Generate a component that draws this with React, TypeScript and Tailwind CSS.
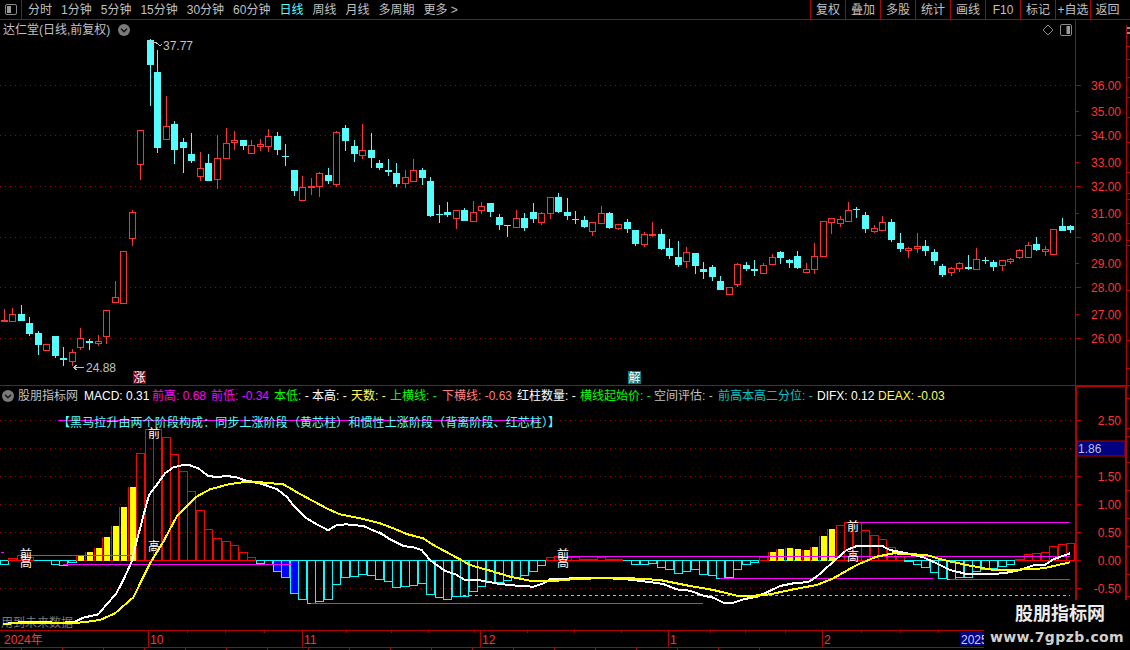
import React from "react";

const RED = "#ff3232";
const CYAN = "#54fcfc";
const LINE = "#b40000";
const DOT = "#a00000";

// candles: cx, wick top, body top, body bottom, wick bottom, 1 = up. read off at 3x, y from 130
const candlesA = [
  [13,537,570,572,572,1],[37,534,553,575,576,1],[64,525,553,573,573,0],[88,561,580,612,617,0],[115,603,610,645,675,0],
  [139,643,643,662,662,1],[166,618,618,678,684,0],[190,651,684,690,708,0],[217,658,667,693,708,1],[241,595,625,653,660,1],
  [268,627,632,637,660,0],[295,616,634,641,648,1],[319,541,541,620,642,1],[346,453,502,518,518,1],[370,364,364,521,521,1],
  [397,240,247,326,348,1],[421,0,0,101,150,1],[450,-273,-270,-195,-72,0],[472,-240,-174,54,68,0],[498,-102,-12,26,26,1],
  [523,-27,-18,60,102,0],[550,25,36,54,128,0],[574,10,72,93,98,0],[601,66,115,140,153,1],[625,72,99,152,152,0],
  [652,15,85,149,177,1],[679,-6,40,85,86,1],[703,3,31,37,60,1],[730,30,30,48,60,0],[754,30,46,71,72,1],
  [781,27,42,47,63,1],[805,-3,18,47,66,1],[832,6,18,60,75,0],[856,42,78,80,108,0],[883,120,120,183,198,0],
  [907,138,172,212,213,1],[934,144,169,173,195,1],[958,126,130,170,201,1],[985,114,135,153,162,0],[1009,3,6,162,170,1],
  [1036,-15,-6,33,63,0],[1063,30,48,72,96,0],[1087,-18,60,75,87,1],[1114,9,60,84,114,0],[1138,90,99,114,120,0],
];
// x from 380
const candlesB = [
  [25,87,120,125,138,0],[49,99,129,162,171,0],[76,120,141,158,174,1],[100,87,120,152,153,1],[127,114,120,144,165,0],
  [151,141,153,258,261,0],[178,225,252,255,279,0],[202,216,246,255,261,0],[229,240,241,266,297,1],[253,234,240,273,273,0],
  [280,213,247,275,276,1],[304,216,229,242,252,1],[331,219,219,246,261,0],[358,252,261,285,300,0],[382,285,285,288,321,0],
  [409,240,265,293,294,1],[433,249,264,294,303,0],[460,219,246,267,279,0],[484,246,250,278,285,1],[511,201,202,250,267,1],
  [535,189,201,246,249,0],[562,204,246,258,270,0],[586,243,267,270,282,0],[613,258,270,291,294,0],[637,276,277,305,318,1],
  [664,228,250,279,282,1],[688,246,249,294,297,0],[715,282,283,296,300,1],[742,267,276,297,309,0],[766,300,300,342,348,0],
  [793,306,313,344,351,1],[817,276,312,316,321,1],[844,297,312,357,360,0],[868,327,354,378,387,0],[895,333,381,405,411,0],
  [919,351,367,395,414,1],[946,369,369,408,432,0],[970,396,417,426,447,0],[997,405,411,441,453,0],[1021,438,453,480,480,0],
  [1048,470,472,494,495,1],[1072,399,403,464,471,1],[1099,396,405,417,423,0],
];
// x from 750
const candlesC = [
  [13,390,417,423,438,0],[40,400,406,430,432,1],[67,372,382,403,405,1],[91,363,366,384,402,0],[118,387,390,399,414,0],
  [142,363,378,414,417,0],[169,399,418,428,429,1],[193,339,379,418,432,1],[220,274,274,379,379,1],[244,264,265,277,312,1],
  [271,258,268,281,291,1],[295,216,241,275,276,1],[320,231,238,241,264,0],[346,246,255,297,309,0],[373,285,295,304,309,1],
  [397,258,277,302,303,1],[424,267,276,330,336,0],[451,309,339,357,366,0],[475,351,353,359,384,1],[502,309,348,354,369,1],
  [526,330,348,363,378,0],[553,357,366,393,405,0],[577,402,408,435,441,0],[604,411,415,428,438,1],[628,396,400,416,426,1],
  [655,375,411,417,420,0],[679,354,388,419,420,1],[706,381,390,393,402,0],[730,390,396,411,423,0],[757,391,391,406,423,1],
  [781,384,387,392,402,1],[808,357,360,380,387,1],[835,336,346,383,384,1],[859,321,342,360,363,0],[886,348,357,362,378,1],
  [910,298,298,374,374,1],[937,264,288,303,303,0],[961,285,288,300,309,0],
];

// histogram: cx, end, kind (0 red, 1 yellow, 2 cyan, 3 blue)
const barsA = [
  [13,431,2],[37,414,0],[64,406,0],[88,412,0],[166,431,2],[190,435,2],[217,427,2],[241,402,1],[268,393,1],[295,381,1],
  [319,348,1],[346,315,1],[370,258,1],[397,198,1],[421,100,0],[448,28,0],[472,28,0],[498,50,0],[523,102,0],[550,154,0],
  [574,214,0],[601,271,0],[625,328,0],[652,355,0],[679,364,0],[703,376,0],[730,397,0],[754,412,0],[781,429,2],[805,432,2],
  [832,452,3],[856,472,3],[883,518,3],[907,538,2],[934,550,2],[958,542,2],[985,538,2],[1009,493,2],[1036,472,2],[1063,469,2],
  [1087,463,2],[1114,466,2],[1138,476,2],
];
const barsB = [
  [25,244,2],[49,260,2],[76,259,2],[100,254,2],[127,250,2],[151,281,2],[178,292,2],[202,296,2],[229,289,2],[253,289,2],
  [280,274,2],[304,257,2],[331,245,2],[358,245,2],[382,241,2],[409,232,2],[433,226,2],[460,214,2],[484,196,2],[511,172,0],
  [535,169,0],[562,172,0],[586,172,0],[613,178,0],[637,178,0],[664,170,0],[688,178,0],[715,178,0],[766,193,2],[793,193,2],
  [817,190,2],[844,200,2],[868,208,2],[895,220,2],[919,214,2],[946,208,2],[970,223,2],[997,226,2],[1021,235,2],[1048,232,2],
  [1072,208,2],[1099,193,2],
];
const barsC = [
  [13,187,2],[40,170,0],[67,153,1],[91,145,1],[118,142,1],[142,145,1],[169,148,1],[193,139,1],[220,105,1],[244,85,1],
  [271,76,0],[295,67,0],[320,67,0],[346,91,0],[373,106,0],[397,118,0],[424,142,0],[451,169,0],[475,184,2],[502,193,2],
  [526,202,2],[553,217,2],[577,235,2],[604,238,2],[628,232,2],[655,232,2],[679,214,2],[706,208,2],[730,205,2],[757,199,2],
  [781,193,2],[808,178,0],[835,163,0],[859,160,0],[886,157,0],[910,139,0],[937,133,0],[961,130,0],
];

const whiteLine = [
  [[10,612],[60,607],[120,607],[190,608],[225,605],[250,593],[295,583],[320,553],[348,522],[370,480],[395,425],[415,345],[432,280],[447,225],[470,195],[495,160],[520,142],[545,136],[570,136],[595,145],[625,168],[650,171],[680,168],[710,172],[740,183],[780,190],[830,207],[860,230],[885,262],[915,292],[945,310],[985,331],[1010,315],[1040,313],[1090,318],[1140,340]],
  [[0,98],[30,118],[70,138],[100,142],[125,150],[150,180],[195,213],[225,222],[255,240],[300,241],[360,252],[420,258],[460,260],[490,250],[510,238],[580,235],[660,233],[740,238],[800,245],[850,252],[890,268],[930,272],[970,287],[1000,293],[1030,308],[1055,310],[1090,298],[1140,288]],
  [[0,290],[40,282],[90,258],[130,250],[175,246],[200,230],[250,185],[290,150],[320,138],[395,137],[420,150],[470,160],[520,172],[560,190],[600,210],[650,222],[710,222],[760,220],[810,210],[850,196],[885,194],[910,178],[960,160]],
];
const yellowLine = [
  [[10,612],[60,609],[190,610],[250,607],[300,600],[345,580],[400,532],[450,430],[490,365],[530,290],[590,230],[630,208],[690,192],[750,184],[850,193],[900,222],[980,265],[1020,283],[1090,297],[1140,310]],
  [[0,70],[40,85],[80,102],[130,115],[160,135],[240,178],[270,195],[330,212],[390,230],[450,242],[530,242],[600,236],[740,234],[840,240],[930,258],[1000,270],[1070,287],[1140,287]],
  [[0,288],[60,283],[130,268],[200,255],[250,235],[320,195],[380,170],[430,160],[530,165],[580,180],[650,195],[730,210],[800,209],[880,205],[960,187]],
];
const origins = [[0, 420], [380, 500], [750, 500]];
const toPoints = (parts: number[][][]) =>
  parts.map((p, i) => p.map(([x, y]) => `${origins[i][0] + x / 3},${origins[i][1] + y / 3}`).join(" ")).join(" ");

const upperGrid = [85.5, 135.5, 186.5, 237.5, 287.5, 338.5];
const lowerGrid = [420.5, 448.5, 476.5, 504.5, 532.5, 588.5];

const priceLabels: [string, number][] = [
  ["36.00", 85], ["35.00", 111], ["34.00", 135], ["33.00", 162], ["32.00", 186], ["31.00", 213],
  ["30.00", 237], ["29.00", 263], ["28.00", 287], ["27.00", 314], ["26.00", 338],
];
const macdLabels: [string, number][] = [
  ["2.50", 420], ["1.50", 476], ["1.00", 504], ["0.50", 532], ["0.00", 560], ["-0.50", 588],
];
const edgeTicks = [46, 59, 77, 97, 117, 142, 172, 193, 199, 223, 240, 245, 290, 340, 368];
const edgeTicksLower = [398, 428, 436, 462, 490, 518, 546, 574, 596];

const periods = ["分时", "1分钟", "5分钟", "15分钟", "30分钟", "60分钟", "日线", "周线", "月线", "多周期", "更多 >"];
const actions = ["复权", "叠加", "多股", "统计", "画线", "F10", "标记", "+自选"];

const legend: { text: string; cls: string; w: string }[] = [
  { text: "MACD: 0.31", cls: "text-white", w: "w-[68px]" },
  { text: "前高: 0.68", cls: "text-[#ff00ff]", w: "w-[59px]" },
  { text: "前低: -0.34", cls: "text-[#ff00ff]", w: "w-[63px]" },
  { text: "本低:", cls: "text-[#00ff00]", w: "w-[38px]" },
  { text: "本高: -", cls: "text-white", w: "w-[39px]" },
  { text: "天数: -", cls: "text-[#ffff54]", w: "w-[39px]" },
  { text: "上横线: -", cls: "text-[#00ff00]", w: "w-[52px]" },
  { text: "下横线: -0.63", cls: "text-[#ff8080]", w: "w-[75px]" },
  { text: "红柱数量: -", cls: "text-white", w: "w-[63px]" },
  { text: "横线起始价: -", cls: "text-[#00ff00]", w: "w-[74px]" },
  { text: "空间评估: -", cls: "text-[#c0c0c0]", w: "w-[64px]" },
  { text: "前高本高二分位: -", cls: "text-[#00c8c8]", w: "w-[99px]" },
  { text: "DIFX: 0.12", cls: "text-white", w: "w-[61px]" },
  { text: "DEAX: -0.03", cls: "text-[#ffff54]", w: "w-[70px]" },
];

function Candles({ data, ox }: { data: number[][]; ox: number }) {
  return (
    <>
      {data.map(([cx, wt, bt, bb, wb, up], i) => {
        const left = Math.floor(ox + cx / 3) - 3;
        const top = Math.round(130 + bt / 3);
        const h = Math.max(Math.round((bb - bt) / 3), 1);
        const color = up ? RED : CYAN;
        return (
          <g key={i}>
            <line x1={left + 3.5} x2={left + 3.5} y1={130 + wt / 3} y2={130 + wb / 3} stroke={color} />
            {up ? (
              <rect x={left + 0.5} y={top + 0.5} width={6} height={h} fill="#000" stroke={color} />
            ) : (
              <rect x={left} y={top} width={7} height={h} fill={color} />
            )}
          </g>
        );
      })}
    </>
  );
}

function Bars({ data, ox, oy }: { data: number[][]; ox: number; oy: number }) {
  const zero = 560.5;
  return (
    <>
      {data.map(([cx, end, kind], i) => {
        const left = Math.round(ox + cx / 3 - 4) + 0.5;
        const y = Math.round(oy + end / 3) + 0.5;
        const top = Math.min(y, zero);
        const h = Math.abs(y - zero);
        if (kind === 1) {
          return (
            <g key={i}>
              <rect x={left + 1.5} y={top} width={6} height={h} fill="#ffff00" />
              <line x1={left} x2={left} y1={top} y2={zero} stroke="#ff0000" />
            </g>
          );
        }
        return (
          <rect
            key={i}
            x={left}
            y={top}
            width={8}
            height={h}
            fill={kind === 3 ? "#0000ff" : "none"}
            stroke={kind === 0 ? "#ff0000" : "#00ffff"}
          />
        );
      })}
    </>
  );
}

function Chevron({ className }: { className: string }) {
  return (
    <svg className={className} viewBox="0 0 12 12">
      <circle cx="6" cy="6" r="6" fill="#7a7a7a" />
      <path d="M3 4.8 L6 7.8 L9 4.8" fill="none" stroke="#111" strokeWidth="1.4" />
    </svg>
  );
}

export default function App() {
  return (
    <div className="relative w-[1130px] h-[650px] bg-black overflow-hidden flex flex-col font-['Liberation_Sans','Noto_Sans_CJK_SC',sans-serif] text-[12px] leading-none text-[#c0c0c0]">
      {/* toolbar */}
      <div className="h-[20px] flex-none flex items-stretch border-b border-[#b40000]">
        <div className="w-[22px] flex-none flex items-center justify-center border-r border-[#b40000]">
          <svg className="w-[12px] h-[11px]" viewBox="0 0 12 11">
            <rect x="0.5" y="0.5" width="11" height="10" rx="1.5" fill="none" stroke="#8a8a8a" />
            <rect x="2" y="2" width="4" height="7" fill="#9a9a9a" />
          </svg>
        </div>
        <div className="flex items-center gap-[9px] pl-[6px]">
          {periods.map((p) => (
            <span key={p} className={p === "日线" ? "text-[#55ffff]" : ""}>
              {p}
            </span>
          ))}
        </div>
        <div className="ml-auto flex items-stretch">
          {actions.map((a) => (
            <div key={a} className="w-[35px] flex items-center justify-center border-l border-[#b40000]">
              {a}
            </div>
          ))}
          <div className="w-[40px] flex items-center justify-center pr-[6px] border-l border-[#b40000]">返回</div>
        </div>
      </div>

      {/* price pane */}
      <div className="h-[366px] flex-none flex border-b border-[#b40000]">
        <div className="relative w-[1075px] flex-none">
          <svg className="absolute inset-0 w-full h-full" viewBox="0 20 1075 365" shapeRendering="crispEdges">
            {upperGrid.map((y) => (
              <line key={y} x1="0" x2="1075" y1={y} y2={y} stroke={DOT} strokeDasharray="1 4" />
            ))}
            <Candles data={candlesA} ox={0} />
            <Candles data={candlesB} ox={380} />
            <Candles data={candlesC} ox={750} />
            <path d="M150 42.5 L156 42.5 L160 45.5 L162 44.5" fill="none" stroke="#c0c0c0" />
            <path d="M73 367.5 L84 367.5 M73 367.5 L77 365 M73 367.5 L77 370" fill="none" stroke="#c0c0c0" />
            <text x="163" y="49.5" fill="#c0c0c0" fontSize="12" shapeRendering="auto">37.77</text>
            <text x="86" y="371.5" fill="#c0c0c0" fontSize="12" shapeRendering="auto">24.88</text>
          </svg>
          <div className="relative h-[19px] flex items-center gap-[6px] pl-[3px]">
            <span>达仁堂(日线,前复权)</span>
            <Chevron className="w-[12px] h-[12px] ml-[2px]" />
          </div>
          <svg className="absolute left-[1042px] top-[4px] w-[12px] h-[12px]" viewBox="0 0 12 12">
            <path d="M6 1 L11 6 L6 11 L1 6 Z" fill="none" stroke="#8a8a8a" />
          </svg>
          <svg className="absolute left-[1060px] top-[4px] w-[12px] h-[12px]" viewBox="0 0 12 12">
            <rect x="0.5" y="0.5" width="11" height="11" rx="1.5" fill="none" stroke="#8a8a8a" />
            <rect x="6.5" y="2" width="3.5" height="8" fill="#9a9a9a" />
          </svg>
          <div className="absolute left-[133px] top-[351px] w-[13px] h-[13px] bg-[#8b0000] text-white text-[12px] flex items-center justify-center">
            涨
          </div>
          <div className="absolute left-[628px] top-[351px] w-[13px] h-[13px] bg-[#008080] text-white text-[12px] flex items-center justify-center">
            解
          </div>
        </div>
        <div className="flex-1 border-l border-[#b40000]">
          <svg className="block w-[54px] h-[365px]" viewBox="1076 20 54 365">
            <line x1="1126.5" x2="1126.5" y1="25" y2="385" stroke={LINE} />
            <rect x="1127" y="27" width="3" height="2" fill="#8a8a8a" />
            <rect x="1127" y="32" width="3" height="2" fill="#8a8a8a" />
            {edgeTicks.map((y) => (
              <line key={y} x1="1127" x2="1130" y1={y + 0.5} y2={y + 0.5} stroke={LINE} />
            ))}
            {priceLabels.map(([t, y]) => (
              <g key={t}>
                <line x1="1076" x2={Number(t) % 2 === 0 ? 1081 : 1079} y1={y + 0.5} y2={y + 0.5} stroke={LINE} />
                <text x="1121" y={y + 4.5} textAnchor="end" fill={RED} fontSize="12">{t}</text>
              </g>
            ))}
          </svg>
        </div>
      </div>

      {/* indicator pane */}
      <div className="h-[245px] flex-none flex border-b border-[#b40000]">
        <div className="relative w-[1075px] flex-none">
          <svg className="absolute inset-0 w-full h-full" viewBox="0 386 1075 244" shapeRendering="crispEdges">
            {lowerGrid.map((y) => (
              <line key={y} x1="0" x2="1075" y1={y} y2={y} stroke={DOT} strokeDasharray="1 4" />
            ))}
            <text x="1" y="627" fill="#7a7a7a" fontSize="12" shapeRendering="auto">用到未来数据</text>
            <line x1="73" x2="256" y1="560.5" y2="560.5" stroke="#ff0000" />
            <line x1="547" x2="623" y1="560.5" y2="560.5" stroke="#ff0000" />
            <line x1="1015" x2="1072" y1="560.5" y2="560.5" stroke="#ff0000" />
            <line x1="0" x2="72" y1="560.5" y2="560.5" stroke="#00ffff" />
            <line x1="256" x2="547" y1="560.5" y2="560.5" stroke="#00ffff" />
            <line x1="623" x2="1015" y1="560.5" y2="560.5" stroke="#00ffff" />
            <Bars data={barsA} ox={0} oy={420} />
            <Bars data={barsB} ox={380} oy={500} />
            <Bars data={barsC} ox={750} oy={500} />
            {[
              [1, 4, 552.5], [26, 133, 555.5], [63, 292, 564.5], [311, 380, 603.5], [380, 703, 603.5],
              [720, 750, 578.5], [567, 1070, 556.5], [860, 1070, 522.5], [750, 933, 578.5], [950, 1070, 579.5], [58, 540, 420.5],
            ].map(([a, b, y], i) => (
              <line key={i} x1={a} x2={b} y1={y} y2={y} stroke="#ff00ff" />
            ))}
            <line x1="463" x2="1070" y1="595.5" y2="595.5" stroke="#ff9c9c" strokeDasharray="3 3" />
            <polyline points={toPoints(whiteLine)} fill="none" stroke="#fff" strokeWidth="2" />
            <polyline points={toPoints(yellowLine)} fill="none" stroke="#ffff00" strokeWidth="2" />
            <g fill="#fff" fontSize="12" textAnchor="middle" shapeRendering="auto">
              <text x="154" y="438">前</text>
              <text x="154" y="551">高</text>
              <text x="26" y="559">前</text>
              <text x="26" y="567">高</text>
              <text x="563" y="559">前</text>
              <text x="563" y="567">高</text>
              <text x="853" y="531">前</text>
              <text x="853" y="561">高</text>
            </g>
          </svg>
          <div className="relative h-[18px] flex items-center pl-[2px] pt-[1px]">
            <Chevron className="w-[12px] h-[12px] flex-none" />
            <span className="w-[70px] flex-none pl-[4px]">股朋指标网</span>
            {legend.map((l) => (
              <span key={l.text} className={`${l.w} flex-none whitespace-nowrap ${l.cls}`}>
                {l.text === "本低:" ? (
                  <>
                    本低:<span className="text-white"> -</span>
                  </>
                ) : (
                  l.text
                )}
              </span>
            ))}
          </div>
          <div className="relative pl-[58px] pt-[13px] tracking-[0.1px] text-[#55ffff] whitespace-nowrap">
            【黑马拉升由两个阶段构成：同步上涨阶段（黄芯柱）和惯性上涨阶段（背离阶段、红芯柱）】
          </div>
        </div>
        <div className="flex-1 border-l-2 border-[#b40000]">
          <svg className="block w-[53px] h-[244px]" viewBox="1077 386 53 244">
            <line x1="1077" x2="1127" y1="386" y2="386" stroke={LINE} strokeWidth="2" />
            <line x1="1126" x2="1126" y1="386" y2="630" stroke={LINE} strokeWidth="2" />
            {edgeTicksLower.map((y) => (
              <line key={y} x1="1127" x2="1130" y1={y + 0.5} y2={y + 0.5} stroke={LINE} />
            ))}
            {macdLabels.map(([t, y]) => (
              <g key={t}>
                <line x1="1077" x2="1081" y1={y + 0.5} y2={y + 0.5} stroke={LINE} />
                <text x="1121" y={y + 4.5} textAnchor="end" fill={RED} fontSize="12">{t}</text>
              </g>
            ))}
            <rect x="1077" y="441" width="48" height="15" fill="#000080" stroke={LINE} />
            <text x="1078" y="453" fill="#b8c0e8" fontSize="12">1.86</text>
          </svg>
        </div>
      </div>

      {/* date axis */}
      <div className="h-[17px] flex-none border-b border-[#b40000]">
        <svg className="block w-[1130px] h-[16px]" viewBox="0 631 1130 16">
          {[187, 225, 264, 346, 391, 428, 474, 527, 574, 621, 710, 745, 785, 861, 900, 938, 1015].map((x) => (
            <line key={x} x1={x + 0.5} x2={x + 0.5} y1="631" y2="633" stroke={LINE} />
          ))}
          {[148, 302, 480, 668, 822].map((x) => (
            <line key={x} x1={x + 0.5} x2={x + 0.5} y1="631" y2="647" stroke={LINE} />
          ))}
          <text x="4" y="643.5" fill={RED} fontSize="12">2024年</text>
          <text x="150" y="643.5" fill={RED} fontSize="12">10</text>
          <text x="304" y="643.5" fill={RED} fontSize="12">11</text>
          <text x="482" y="643.5" fill={RED} fontSize="12">12</text>
          <text x="670" y="643.5" fill={RED} fontSize="12">1</text>
          <text x="824" y="643.5" fill={RED} fontSize="12">2</text>
          <rect x="960" y="632" width="30" height="14" fill="#000080" />
          <text x="961" y="643.5" fill="#c8d4ff" fontSize="12">2025</text>
        </svg>
      </div>
      <div className="flex-1 flex">
        {[21, 73, 115, 144, 177, 210, 250, 290, 333, 380, 423, 470, 520, 560, 610, 650, 700, 760, 808].map((x, i) => (
          <span key={x} className={`h-full w-px bg-[#b40000] ${i === 0 ? "ml-[21px]" : "ml-[40px]"}`} />
        ))}
      </div>

      {/* watermark */}
      <div className="absolute left-[984px] top-[600px] w-[146px] h-[50px] bg-black flex flex-col items-center pt-[5px]">
        <span className="ml-[6px] text-[18px] font-bold text-[#ececec]">股朋指标网</span>
        <span className="mt-[7px] text-[14px] font-bold tracking-[0.4px] text-[#d0d0d0] font-['DejaVu_Sans',sans-serif] whitespace-nowrap">www.7gpzb.com</span>
      </div>
    </div>
  );
}
